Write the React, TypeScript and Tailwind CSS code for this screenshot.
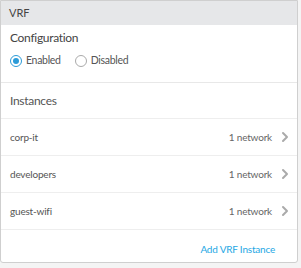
import { ChevronRight } from 'lucide-react';

const instances = [
  { name: 'corp-it', count: '1 network' },
  { name: 'developers', count: '1 network' },
  { name: 'guest-wifi', count: '1 network' },
];

export default function App() {
  return (
    <div
      className="h-[268px] w-[301px] bg-[#f4f4f4]"
      style={{ fontFamily: 'Lato, sans-serif' }}
    >
      <div className="w-[298px] h-[263px] border border-[#cfcfcf] bg-white rounded-b-[3px] text-[#555]">
        <div className="h-[24px] bg-[#e6e7e9] pl-[8px] flex items-center text-[11px] text-[#444]">
          VRF
        </div>
        <div className="px-[9px] pt-[5px] pb-[14px] border-b border-[#e8e8e8]">
          <div className="h-[16px] leading-[16px] text-[12px] tracking-[-0.3px] text-[#444]">
            Configuration
          </div>
          <div className="h-[14px] flex items-center mt-[8px] text-[10.5px] tracking-[-0.3px]">
            <label className="flex items-center gap-[4px]">
              <span className="w-[12px] h-[12px] rounded-full border border-[#2b9bd8] flex items-center justify-center">
                <span className="w-[6px] h-[6px] rounded-full bg-[#2b9bd8]" />
              </span>
              Enabled
            </label>
            <label className="flex items-center gap-[4px] ml-[14px]">
              <span className="w-[12px] h-[12px] rounded-full border border-[#aaa]" />
              Disabled
            </label>
          </div>
        </div>
        <div className="h-[36px] px-[9px] flex items-center border-b border-[#eee] text-[12px] tracking-[-0.3px] text-[#555]">
          Instances
        </div>
        {instances.map((item) => (
          <div
            key={item.name}
            className="h-[37px] pl-[9px] pr-[4px] flex items-center justify-between border-b border-[#eee] text-[10px] tracking-[-0.2px]"
          >
            <span>{item.name}</span>
            <span className="flex items-center gap-[5px] text-[#666]">
              {item.count}
              <ChevronRight size={16} strokeWidth={3} className="text-[#aaa]" />
            </span>
          </div>
        ))}
        <div className="flex justify-end pr-[22px] pt-[11px] leading-[16px] text-[10px] tracking-[-0.2px] text-[#1ea7e4]">
          Add VRF Instance
        </div>
      </div>
    </div>
  );
}
